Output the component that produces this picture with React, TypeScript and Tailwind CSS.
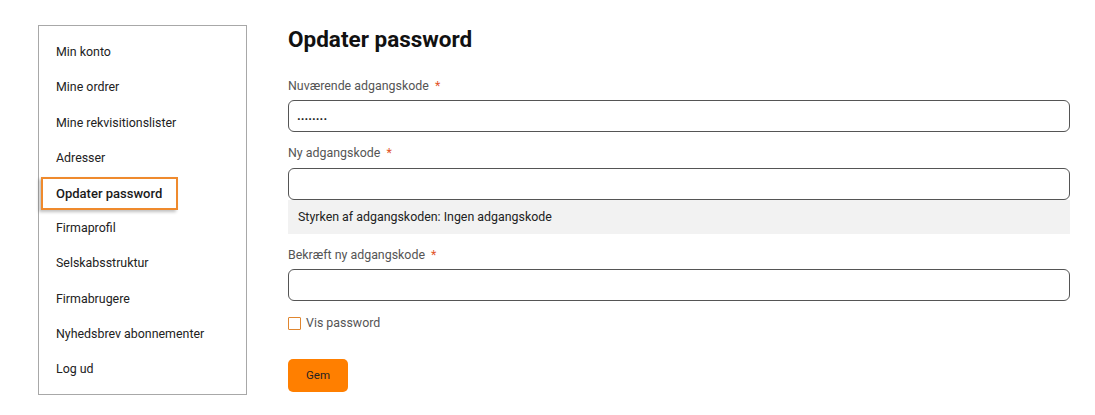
import React from "react";

const items = [
  "Min konto",
  "Mine ordrer",
  "Mine rekvisitionslister",
  "Adresser",
  "Opdater password",
  "Firmaprofil",
  "Selskabsstruktur",
  "Firmabrugere",
  "Nyhedsbrev abonnementer",
  "Log ud",
];

function Label({ text }: { text: string }) {
  return (
    <div className="h-[18px] leading-[18px] text-[12.4px] text-[#555]">
      {text} <span className="ml-[3px] text-[#e2552a]">*</span>
    </div>
  );
}

export default function App() {
  return (
    <div
      className="flex bg-white w-[1095px] h-[415px] pl-[38px] pt-[25px]"
      style={{ fontFamily: 'Roboto, "Liberation Sans", Arial, sans-serif' }}
    >
      <div className="w-[209px] h-[370px] border border-[#a8a8a8] pt-[9px] shrink-0">
        {items.map((it) =>
          it === "Opdater password" ? (
            <div key={it} className="h-[35.2px] flex items-center">
              <div className="ml-[2px] w-[137px] h-[33px] border-2 border-[#ef8a2d] pl-[13px] flex items-center text-[13px] font-medium text-[#1a1a1a] shadow-[-2px_2px_3px_rgba(0,0,0,0.25)]">
                {it}
              </div>
            </div>
          ) : (
            <div
              key={it}
              className="h-[35.2px] flex items-center pl-[17px] text-[12.4px] text-[#222]"
            >
              {it}
            </div>
          )
        )}
      </div>
      <div className="ml-[41px] w-[782px] flex flex-col">
        <h1 className="h-[28px] leading-[28px] text-[22.5px] font-bold text-[#111]">
          Opdater password
        </h1>
        <div className="mt-[24px]">
          <Label text="Nuværende adgangskode" />
        </div>
        <div className="mt-[5px] h-[32px] border border-[#555] rounded-[6px] flex items-center pl-[8px] text-[13px] font-bold text-[#222]">
          ........
        </div>
        <div className="mt-[12px]">
          <Label text="Ny adgangskode" />
        </div>
        <div className="mt-[6px] h-[32px] border border-[#555] rounded-[6px]" />
        <div className="h-[34px] bg-[#f2f2f2] flex items-center pl-[10px] text-[12.4px] text-[#222]">
          Styrken af adgangskoden: Ingen adgangskode
        </div>
        <div className="mt-[12px]">
          <Label text="Bekræft ny adgangskode" />
        </div>
        <div className="mt-[5px] h-[32px] border border-[#555] rounded-[6px]" />
        <div className="mt-[13px] h-[18px] flex items-center">
          <div className="w-[13px] h-[13px] border border-[#e0862f] rounded-[1px] bg-white" />
          <span className="ml-[5px] text-[12.4px] text-[#555]">Vis password</span>
        </div>
        <button className="mt-[27px] w-[60px] h-[33px] bg-[#ff7f00] rounded-[5px] text-[11.5px] text-[#222] flex items-center justify-center">
          Gem
        </button>
      </div>
    </div>
  );
}
